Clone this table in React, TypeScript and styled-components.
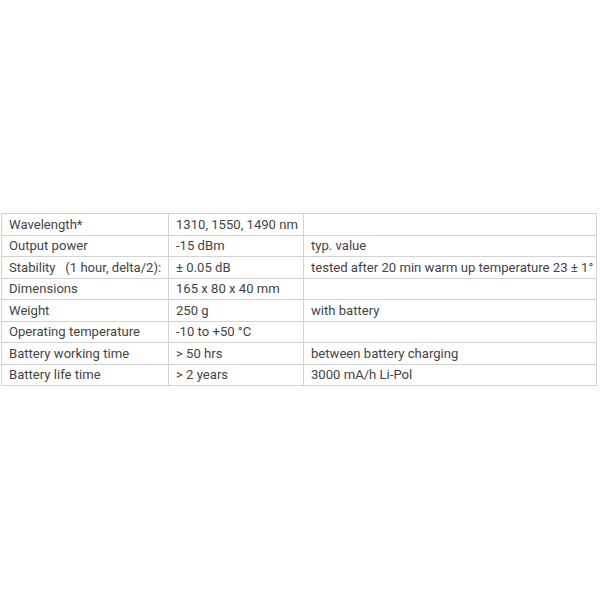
import styled, { createGlobalStyle } from "styled-components";

const GlobalStyle = createGlobalStyle`
  html, body {
    margin: 0;
    padding: 0;
    background: #ffffff;
  }
  body {
    font-family: Roboto, "Liberation Sans", Arial, sans-serif;
  }
`;

const Page = styled.div`
  width: 600px;
  height: 600px;
  padding: 213px 3px 0 1px;
  box-sizing: border-box;
`;

const Specs = styled.table`
  width: 100%;
  table-layout: fixed;
  border-collapse: collapse;
  border: 1px solid #d2d2d2;
  font-size: 13.1px;
  color: #444444;
`;

const Row = styled.tr`
  height: 21.5px;
`;

const Cell = styled.td<{ $w?: number }>`
  border: 1px solid #d2d2d2;
  padding: 0 2px 0 7px;
  line-height: 19px;
  white-space: nowrap;
  overflow: hidden;
  width: ${(p) => (p.$w ? `${p.$w}px` : "auto")};
`;

const rows: [string, string, string][] = [
  ["Wavelength*", "1310, 1550, 1490 nm", ""],
  ["Output power", "-15 dBm", "typ. value"],
  ["Stability \u00a0\u00a0(1 hour, delta/2):", "± 0.05 dB", "tested after 20 min warm up temperature 23 ± 1°"],
  ["Dimensions", "165 x 80 x 40 mm", ""],
  ["Weight", "250 g", "with battery"],
  ["Operating temperature", "-10 to +50 °C", ""],
  ["Battery working time", "> 50 hrs", "between battery charging"],
  ["Battery life time", "> 2 years", "3000 mA/h Li-Pol"],
];

function App() {
  return (
    <>
      <GlobalStyle />
      <Page>
        <Specs>
          <colgroup>
            <col style={{ width: 167 }} />
            <col style={{ width: 135 }} />
            <col />
          </colgroup>
          <tbody>
            {rows.map(([a, b, c]) => (
              <Row key={a}>
                <Cell>{a}</Cell>
                <Cell>{b}</Cell>
                <Cell>{c}</Cell>
              </Row>
            ))}
          </tbody>
        </Specs>
      </Page>
    </>
  );
}

export default App;
